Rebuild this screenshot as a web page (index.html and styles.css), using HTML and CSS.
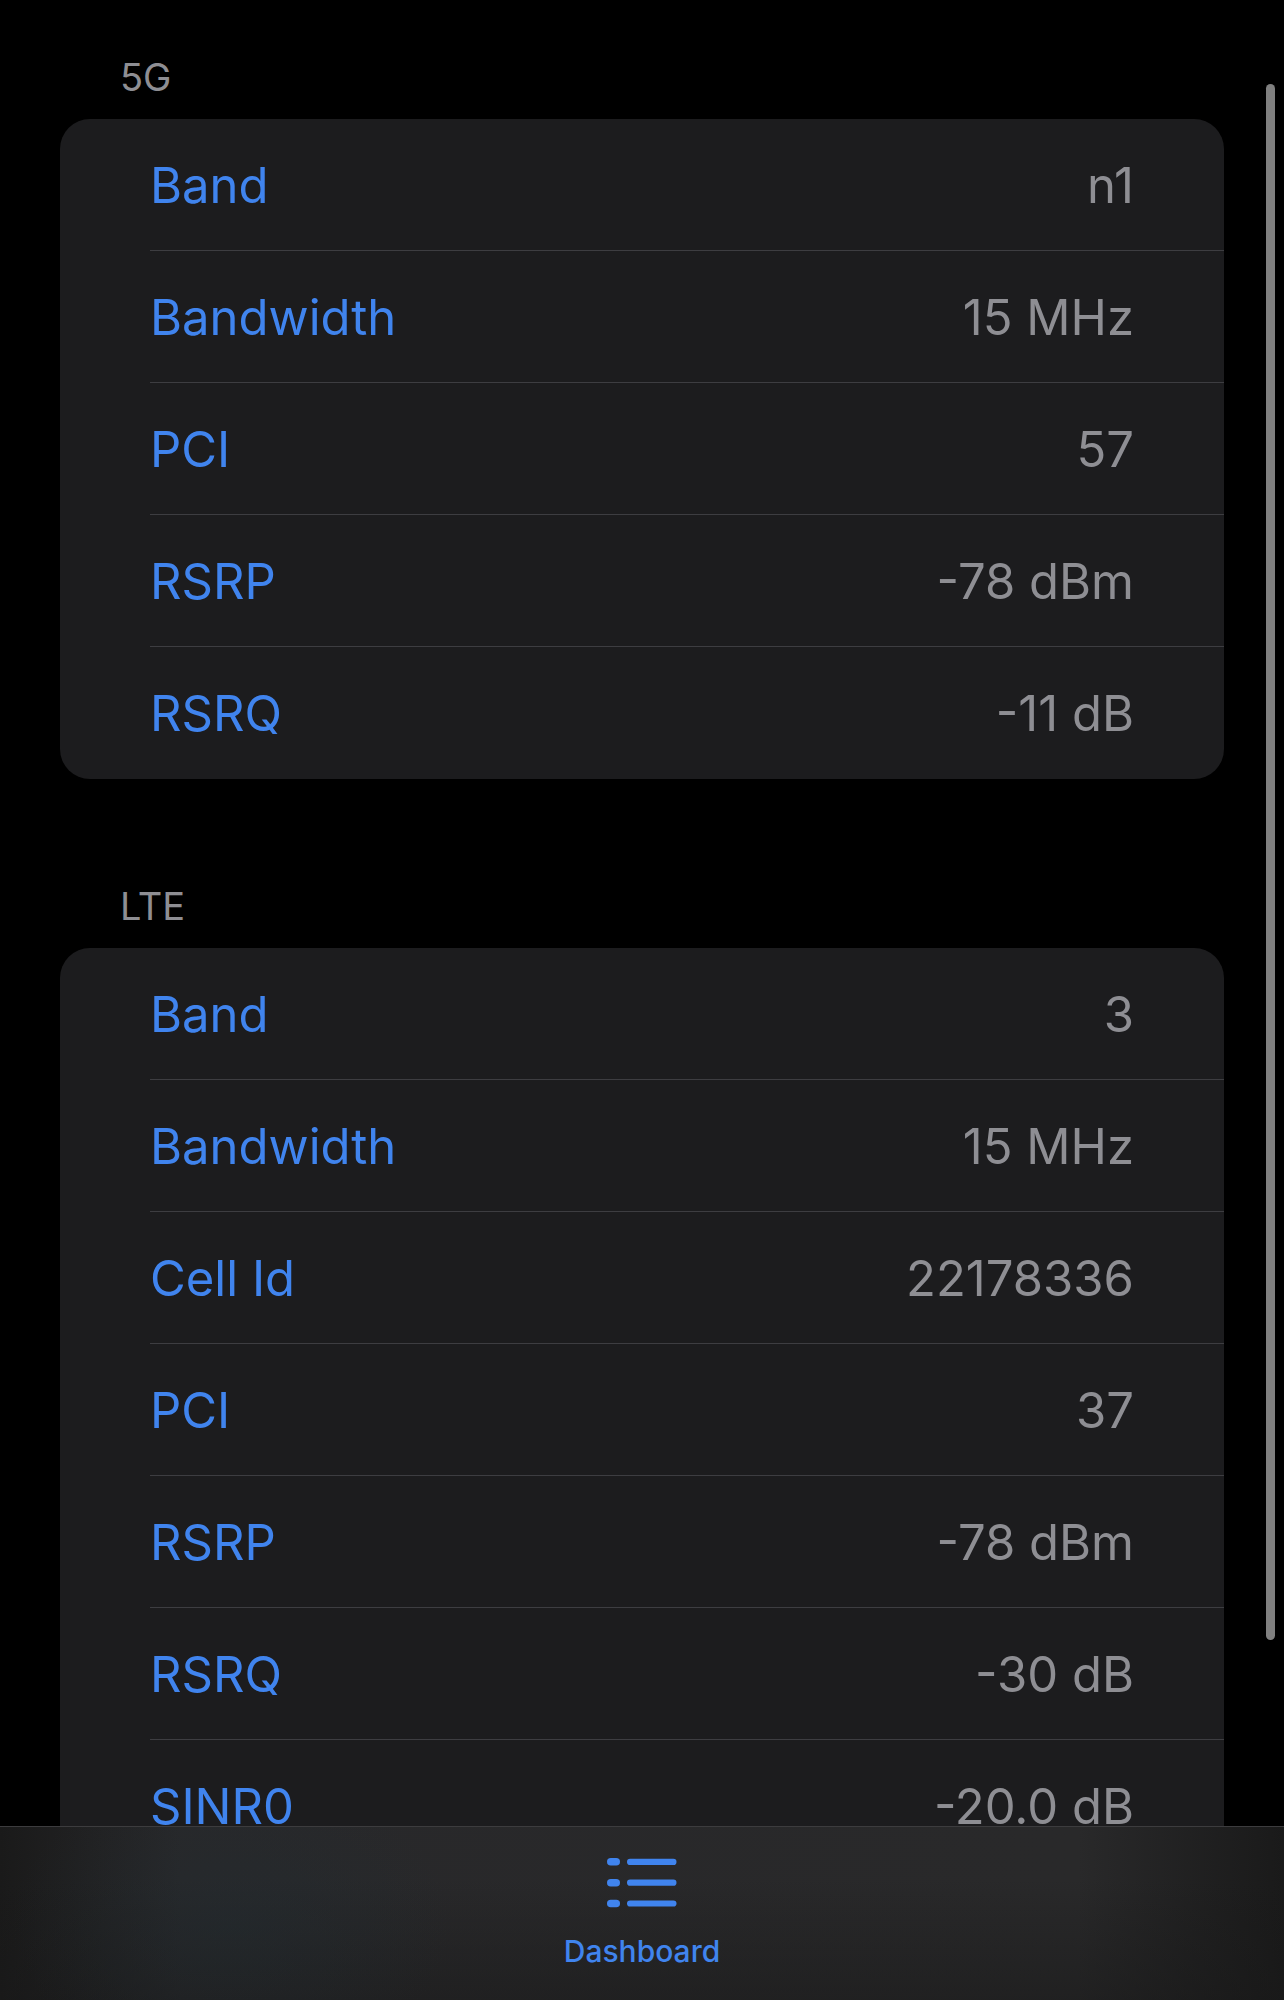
FILE: index.html
```html
<!DOCTYPE html>
<html lang="en">
<head>
    <meta charset="UTF-8">
    <meta name="viewport" content="width=device-width, initial-scale=1.0">
    <title>Dashboard</title>
    <link rel="stylesheet" href="styles.css">
</head>
<body>
    <main>
        <section>
            <h2>5G</h2>
            <dl class="card">
                <div class="row"><dt>Band</dt><dd>n1</dd></div>
                <div class="row"><dt>Bandwidth</dt><dd>15 MHz</dd></div>
                <div class="row"><dt>PCI</dt><dd>57</dd></div>
                <div class="row"><dt>RSRP</dt><dd>-78 dBm</dd></div>
                <div class="row"><dt>RSRQ</dt><dd>-11 dB</dd></div>
            </dl>
        </section>

        <section>
            <h2>LTE</h2>
            <dl class="card">
                <div class="row"><dt>Band</dt><dd>3</dd></div>
                <div class="row"><dt>Bandwidth</dt><dd>15 MHz</dd></div>
                <div class="row"><dt>Cell Id</dt><dd>22178336</dd></div>
                <div class="row"><dt>PCI</dt><dd>37</dd></div>
                <div class="row"><dt>RSRP</dt><dd>-78 dBm</dd></div>
                <div class="row"><dt>RSRQ</dt><dd>-30 dB</dd></div>
                <div class="row"><dt>SINR0</dt><dd>-20.0 dB</dd></div>
            </dl>
        </section>
    </main>
    <div class="scroll-thumb"></div>

    <nav class="tab-bar">
        <a class="tab" href="#">
            <svg class="tab-icon" viewBox="0 0 70 50" aria-hidden="true">
                <rect x="0" y="0" width="13" height="7.5" rx="3.75"/>
                <rect x="0" y="21" width="13" height="7.5" rx="3.75"/>
                <rect x="0" y="41.7" width="13" height="7.5" rx="3.75"/>
                <rect x="20" y="0.8" width="49.5" height="6.2" rx="3.1"/>
                <rect x="20" y="21.6" width="49.5" height="6.2" rx="3.1"/>
                <rect x="20" y="42.4" width="49.5" height="6.2" rx="3.1"/>
            </svg>
            <span>Dashboard</span>
        </a>
    </nav>
</body>
</html>
```

FILE: styles.css
```css
* {
    box-sizing: border-box;
}

body {
    display: flex;
    flex-direction: column;
    height: 100vh;
    margin: 0;
    background-color: #000;
    color: #8e8e93;
    font-family: Inter, "Liberation Sans", sans-serif;
}

main {
    flex: 1;
    min-height: 0;
    padding: 53px 60px 0;
    overflow-y: auto;
    scrollbar-width: none;
}

section {
    margin-bottom: 103px;
}

h2 {
    margin: 0 60px 18px;
    font-size: 38px;
    font-weight: 400;
    line-height: 48px;
}

.card {
    margin: 0;
    padding-left: 90px;
    background-color: #1c1c1e;
    border-radius: 30px;
}

.row {
    display: flex;
    justify-content: space-between;
    padding: 37px 90px 34px 0;
    border-bottom: 1px solid #3d3d41;
    font-size: 49px;
    line-height: 60px;
}

.row:last-child {
    border-bottom-color: transparent;
}

dt {
    color: #4084ee;
}

dd {
    margin: 0;
}

/* scroll position indicator */
.scroll-thumb {
    position: absolute;
    top: 84px;
    right: 9px;
    bottom: 360px;
    width: 9px;
    border-radius: 5px;
    background-color: #808080;
}

.tab-bar {
    display: flex;
    justify-content: center;
    border-top: 1px solid #3c3c3e;
    background:
        radial-gradient(ellipse 220px 150px at 18% 55%, rgba(32, 44, 50, 0.4), transparent),
        linear-gradient(to bottom, transparent 30%, rgba(24, 24, 24, 0.5)),
        linear-gradient(to right, #1a1a1a, #28282a 14%, #29292a 84%, #1a1a1a);
}

.tab {
    display: flex;
    flex-direction: column;
    align-items: center;
    gap: 25px;
    padding: 31px 40px;
    color: #4084ee;
    font-size: 30px;
    font-weight: 500;
    line-height: 36px;
    text-decoration: none;
}

.tab-icon {
    width: 70px;
    height: 50px;
    fill: currentColor;
}
```
